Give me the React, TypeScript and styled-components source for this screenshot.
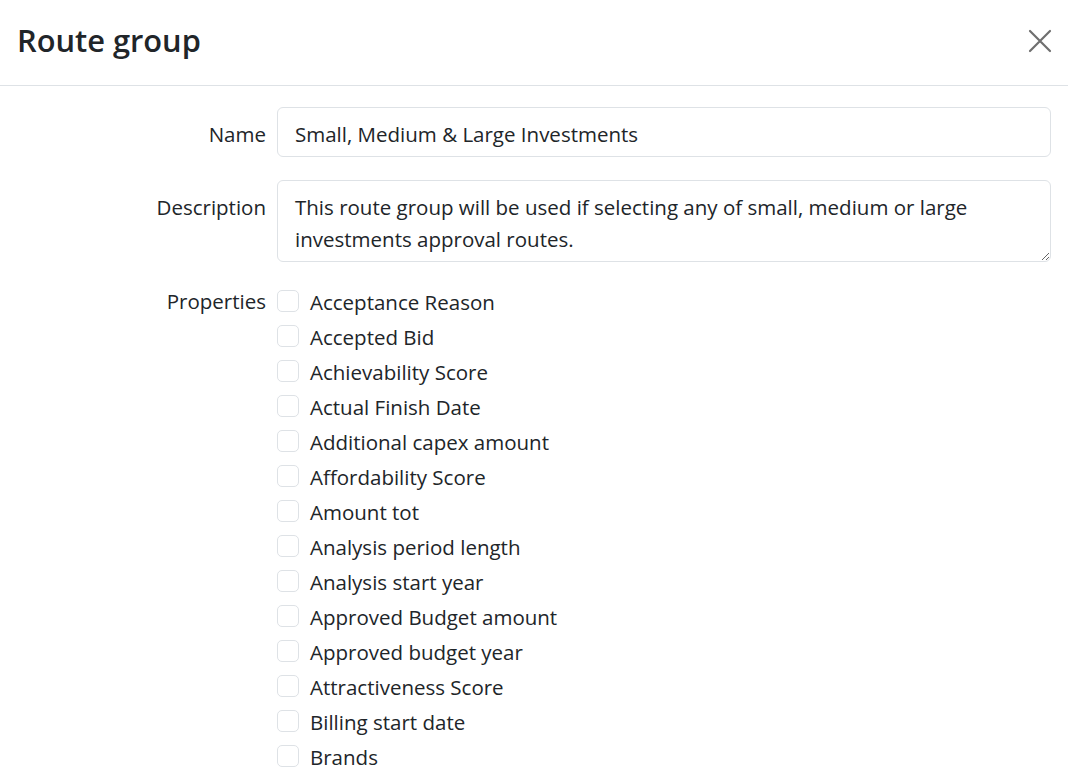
import React from "react";
import styled, { createGlobalStyle } from "styled-components";

const GlobalStyle = createGlobalStyle`
  * { box-sizing: border-box; }
  html, body { margin: 0; padding: 0; background: #fff; }
  body {
    font-family: "Open Sans", "Noto Sans", sans-serif;
    color: #212529;
    overflow: hidden;
  }
`;

const properties = [
  "Acceptance Reason",
  "Accepted Bid",
  "Achievability Score",
  "Actual Finish Date",
  "Additional capex amount",
  "Affordability Score",
  "Amount tot",
  "Analysis period length",
  "Analysis start year",
  "Approved Budget amount",
  "Approved budget year",
  "Attractiveness Score",
  "Billing start date",
  "Brands",
];

function CloseIcon() {
  return (
    <svg width="24" height="24" viewBox="0 0 24 24">
      <path d="M2 2 L22 22 M22 2 L2 22" stroke="#6f6f6f" strokeWidth="2.2" strokeLinecap="round" />
    </svg>
  );
}

function App() {
  return (
    <>
      <GlobalStyle />
      <Modal>
        <Header>
          <Title>Route group</Title>
          <CloseButton aria-label="Close">
            <CloseIcon />
          </CloseButton>
        </Header>
        <Body>
          <Row>
            <Label>Name</Label>
            <Input defaultValue="Small, Medium & Large Investments" />
          </Row>
          <Row>
            <Label>Description</Label>
            <TextArea
              rows={2}
              defaultValue="This route group will be used if selecting any of small, medium or large investments approval routes."
            />
          </Row>
          <Row>
            <Label $top={0}>Properties</Label>
            <CheckList>
              {properties.map((p) => (
                <CheckRow key={p}>
                  <Check type="checkbox" />
                  <CheckText>{p}</CheckText>
                </CheckRow>
              ))}
            </CheckList>
          </Row>
        </Body>
      </Modal>
    </>
  );
}

const Modal = styled.div`
  width: 1068px;
  height: 778px;
  overflow: hidden;
  background: #fff;
`;

const Header = styled.div`
  height: 86px;
  display: flex;
  align-items: center;
  justify-content: space-between;
  padding: 0 16px 4px 17px;
  border-bottom: 1px solid #dee2e6;
`;

const Title = styled.h1`
  margin: 0;
  font-size: 30.8px;
  font-weight: 600;
  line-height: 1.2;
  color: #212529;
`;

const CloseButton = styled.button`
  border: none;
  background: transparent;
  padding: 0;
  width: 24px;
  height: 24px;
  cursor: pointer;
  display: flex;
`;

const Body = styled.div`
  padding: 21px 17px 0 0;
  display: flex;
  flex-direction: column;
  gap: 23px;
`;

const Row = styled.div`
  display: grid;
  grid-template-columns: 266px 1fr;
  column-gap: 11px;
  align-items: start;
`;

const Label = styled.label<{ $top?: number }>`
  text-align: right;
  font-size: 20.5px;
  line-height: 32px;
  padding-top: ${(p) => (p.$top !== undefined ? p.$top : 11)}px;
  color: #212529;
`;

const fieldBase = `
  width: 100%;
  border: 1px solid #dee2e6;
  border-radius: 6px;
  font-family: "Open Sans", "Noto Sans", sans-serif;
  font-size: 20.5px;
  line-height: 32px;
  color: #212529;
  padding: 10px 17px 6px;
  background: #fff;
  outline: none;
`;

const Input = styled.input`
  ${fieldBase}
  height: 50px;
`;

const TextArea = styled.textarea`
  ${fieldBase}
  height: 82px;
  resize: vertical;
  display: block;
`;

const CheckList = styled.div`
  display: flex;
  flex-direction: column;
  margin-top: -2px;
`;

const CheckRow = styled.label`
  display: flex;
  align-items: center;
  height: 35px;
`;

const Check = styled.input`
  appearance: none;
  width: 22px;
  height: 22px;
  margin: 0 11px 0 0;
  border: 1px solid #dee2e6;
  border-radius: 5px;
  background: #fff;
  flex-shrink: 0;
`;

const CheckText = styled.span`
  font-size: 20.5px;
  line-height: 32px;
  padding-top: 2px;
  color: #212529;
`;

export default App;
